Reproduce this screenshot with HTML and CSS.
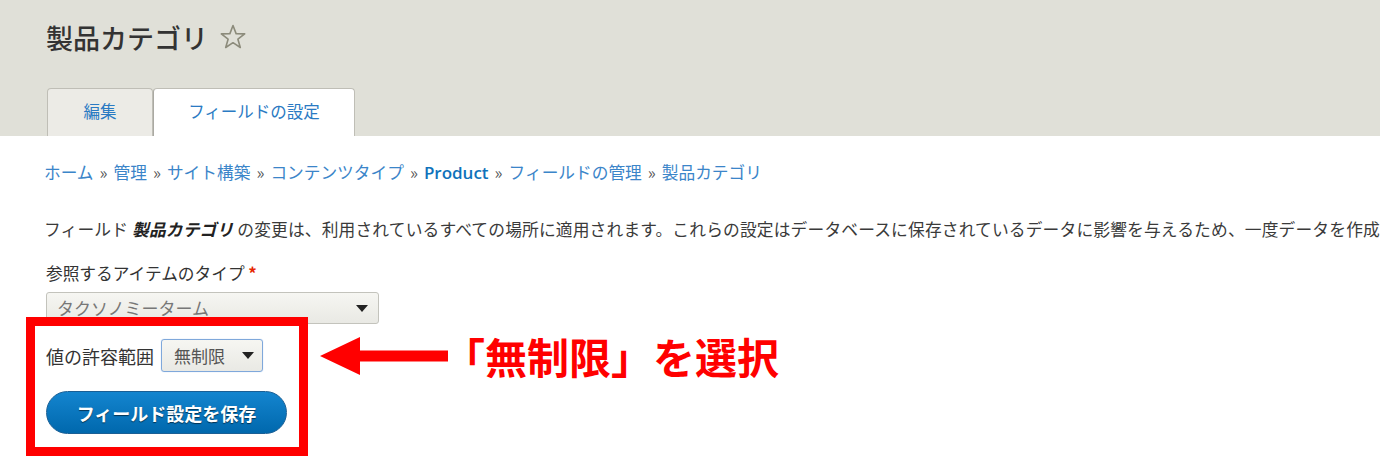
FILE: index.html
```html
<!DOCTYPE html>
<html lang="ja">
<head>
<meta charset="utf-8">
<title>製品カテゴリ</title>
<link rel="stylesheet" href="styles.css">
</head>
<body>
<header class="page-header">
  <h1 class="page-title">製品カテゴリ
    <svg class="star" viewBox="0 0 26 26" width="26" height="26" aria-hidden="true"><polygon points="13,1.5 16.1,9.6 24.7,9.9 17.9,15.2 20.3,23.5 13,18.7 5.7,23.5 8.1,15.2 1.3,9.9 9.9,9.6" fill="none" stroke="#8c8b7b" stroke-width="1.6" stroke-linejoin="round"/></svg>
  </h1>
  <ul class="tabs">
    <li class="tab"><a href="#">編集</a></li>
    <li class="tab tab-active"><a href="#">フィールドの設定</a></li>
  </ul>
</header>
<main class="content">
  <nav class="breadcrumb">
    <a href="#">ホーム</a><span class="sep">»</span><a href="#">管理</a><span class="sep">»</span><a href="#">サイト構築</a><span class="sep">»</span><a href="#">コンテンツタイプ</a><span class="sep">»</span><a href="#" class="latin">Product</a><span class="sep">»</span><a href="#">フィールドの管理</a><span class="sep">»</span><a href="#">製品カテゴリ</a>
  </nav>
  <p class="description">フィールド <em>製品カテゴリ</em> の変更は、利用されているすべての場所に適用されます。これらの設定はデータベースに保存されているデータに影響を与えるため、一度データを作成</p>
  <div class="form-item">
    <label class="label">参照するアイテムのタイプ <span class="required">*</span></label>
    <div class="select select-wide"><span class="select-text">タクソノミーターム</span><span class="caret"></span></div>
  </div>
  <div class="highlight">
    <div class="inline-item">
      <span class="label">値の許容範囲</span>
      <div class="select select-focus"><span class="select-text dark">無制限</span><span class="caret"></span></div>
    </div>
    <button class="button-primary" type="button">フィールド設定を保存</button>
    <div class="callout">
      <svg class="arrow" viewBox="0 0 128 40" width="128" height="40" aria-hidden="true"><polygon points="0,20 40,1 40,14.5 128,14.5 128,25.5 40,25.5 40,39" fill="#ff0000"/></svg>
      <span class="callout-text">「無制限」を選択</span>
    </div>
  </div>
</main>
</body>
</html>
```
FILE: styles.css
```css
html, body {
  margin: 0;
  padding: 0;
  background: #ffffff;
}
body {
  font-family: "Noto Sans CJK JP", "Noto Sans", sans-serif;
  color: #333;
  overflow: hidden;
  width: 1380px;
  height: 462px;
}
.page-header {
  height: 136px;
  box-sizing: border-box;
  background: #e0e0d8;
  display: flex;
  flex-direction: column;
  padding-left: 46px;
}
.page-title {
  margin: 0;
  padding-top: 18px;
  font-size: 27px;
  line-height: 40px;
  font-weight: 500;
  color: #333;
  display: flex;
  align-items: center;
  gap: 12px;
}
.star {
  display: block;
  margin-top: -2px;
}
.tabs {
  list-style: none;
  margin: auto 0 0 1px;
  padding: 0;
  display: flex;
}
.tab {
  height: 48px;
  box-sizing: border-box;
  border: 1px solid #bfbeb6;
  border-bottom: none;
  border-radius: 4px 4px 0 0;
  background: #ecebe6;
  display: flex;
  align-items: center;
  justify-content: center;
  width: 106px;
}
.tab-active {
  background: #ffffff;
  width: 202px;
  border-left: 1px solid #aaa9a2;
}
.tab a {
  color: #2a7ac3;
  text-decoration: none;
  font-size: 16.5px;
  line-height: 24px;
  margin-top: -3px;
}
.content {
  padding-left: 44px;
}
.breadcrumb {
  margin-top: 24px;
  font-size: 16.7px;
  line-height: 24px;
  white-space: nowrap;
}
.breadcrumb a {
  color: #3b85c9;
  text-decoration: none;
}
.breadcrumb a.latin {
  color: #0f72bb;
  font-family: "Open Sans", "Noto Sans", sans-serif;
  font-weight: 600;
  font-size: 17px;
}
.breadcrumb .sep {
  color: #555;
  margin: 0 6px;
}
.description {
  margin: 32px 0 0;
  font-size: 16.75px;
  letter-spacing: 0.14px;
  line-height: 24px;
  white-space: nowrap;
  color: #3a3a3a;
}
.description em {
  font-weight: bold;
  font-style: italic;
  color: #222;
}
.form-item {
  margin-top: 20px;
  margin-left: 2px;
}
.label {
  display: block;
  font-size: 16.7px;
  line-height: 24px;
  color: #333;
}
.required {
  color: #e62600;
  font-weight: bold;
}
.select {
  box-sizing: border-box;
  border: 1px solid #c3c3bc;
  border-radius: 3px;
  background: linear-gradient(#f6f6f2, #e9e9e4);
  display: flex;
  align-items: center;
  justify-content: space-between;
  padding: 0 10px;
}
.select-wide {
  margin-top: 7px;
  width: 333px;
  height: 32px;
}
.select-text {
  font-size: 17px;
  line-height: 24px;
  color: #777;
}
.select-text.dark {
  color: #555;
}
.caret {
  width: 0;
  height: 0;
  border-left: 6px solid transparent;
  border-right: 6px solid transparent;
  border-top: 7px solid #222;
}
.highlight {
  position: relative;
  margin-top: 15px;
  margin-left: 2px;
}
.highlight::before {
  content: "";
  position: absolute;
  left: -20px;
  top: -22px;
  width: 282px;
  height: 139px;
  box-sizing: border-box;
  border: 9px solid #ff0000;
  pointer-events: none;
}
.inline-item {
  display: flex;
  align-items: center;
  gap: 7px;
}
.inline-item .label {
  font-size: 18px;
}
.select-focus {
  width: 102px;
  height: 33px;
  border-color: #7fa8db;
  box-shadow: 0 0 1px #9fc0ea;
  padding: 0 8px 0 12px;
}
.button-primary {
  margin-top: 19px;
  width: 241px;
  height: 43px;
  border-radius: 22px;
  border: 1px solid #1a5f95;
  background: linear-gradient(#1485cf, #0068ad);
  color: #fff;
  font-family: "Noto Sans CJK JP", "Noto Sans", sans-serif;
  font-weight: bold;
  font-size: 18px;
  text-shadow: 0 1px 1px rgba(0, 0, 0, 0.55);
  padding: 0;
  display: block;
}
.callout {
  position: absolute;
  left: 274px;
  top: -5px;
  display: flex;
  align-items: center;
  white-space: nowrap;
}
.arrow {
  display: block;
}
.callout-text {
  margin-left: -5px;
  font-size: 42px;
  line-height: 44px;
  font-weight: bold;
  color: #ff0000;
}
```
